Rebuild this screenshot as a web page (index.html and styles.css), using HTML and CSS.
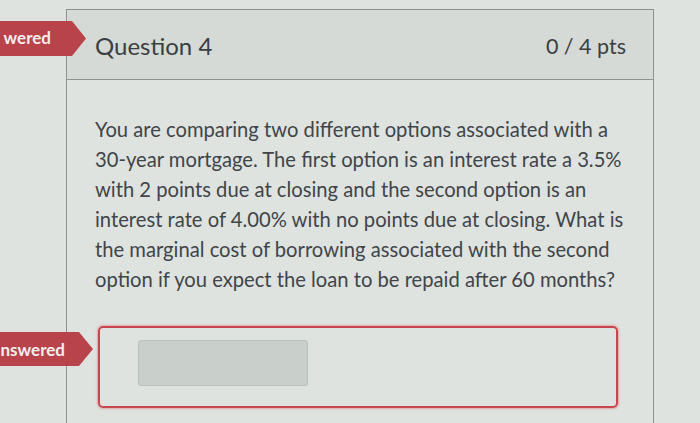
FILE: index.html
```html
<!DOCTYPE html>
<html>
<head>
<meta charset="utf-8">
<link rel="stylesheet" href="styles.css">
</head>
<body>
<div class="page">
  <div class="badge badge-top"><span>wered</span></div>
  <div class="badge badge-bottom"><span>nswered</span></div>
  <div class="question">
    <div class="q-header">
      <span class="q-title">Question 4</span>
      <span class="q-pts">0 / 4 pts</span>
    </div>
    <div class="q-body">
      <p class="q-text">You are comparing two different options associated with a<br>30-year mortgage. The first option is an interest rate a 3.5%<br>with 2 points due at closing and the second option is an<br>interest rate of 4.00% with no points due at closing. What is<br>the marginal cost of borrowing associated with the second<br>option if you expect the loan to be repaid after 60 months?</p>
      <div class="answer">
        <div class="answer-input"></div>
      </div>
    </div>
  </div>
</div>
</body>
</html>
```
FILE: styles.css
```css
html, body {
  margin: 0;
  padding: 0;
}
body {
  width: 700px;
  height: 423px;
  overflow: hidden;
  background: #dfe3df;
  font-family: Lato, "Open Sans", sans-serif;
}
.page {
  position: relative;
  padding: 9px 0 0 66px;
  height: 414px;
}
.badge {
  position: absolute;
  left: 0;
  background: #b8434b;
  color: #f4eeee;
  font-weight: 700;
  font-size: 17px;
  display: flex;
  justify-content: flex-end;
  align-items: center;
  overflow: hidden;
  white-space: nowrap;
  clip-path: polygon(0 0, calc(100% - 14px) 0, 100% 50%, calc(100% - 14px) 100%, 0 100%);
  box-sizing: border-box;
}
.badge-top {
  top: 21px;
  width: 86px;
  height: 35px;
  padding: 0 35px 2px 0;
}
.badge-bottom {
  top: 332px;
  width: 93px;
  height: 34px;
  padding: 0 28px 0 0;
}
.question {
  width: 588px;
  border: 1px solid #8d918f;
  border-bottom: none;
  height: 420px;
  box-sizing: border-box;
}
.q-header {
  height: 69px;
  border-bottom: 1px solid #8d918f;
  background: #d6dad6;
  display: flex;
  justify-content: space-between;
  align-items: center;
  padding: 0 27px 0 28px;
  color: #3a3f43;
}
.q-title {
  font-size: 24px;
  padding-top: 2px;
}
.q-pts {
  font-size: 21.5px;
  padding-top: 2px;
}
.q-body {
  padding: 34px 0 0 28px;
}
.q-text {
  margin: 0;
  white-space: nowrap;
  font-size: 20.2px;
  line-height: 30px;
  color: #40454a;
}
.answer {
  margin: 32px 0 0 3px;
  width: 520px;
  height: 82px;
  box-sizing: border-box;
  border: 2px solid #c7474f;
  border-radius: 5px;
  box-shadow: 0 0 2px 1px rgba(226, 140, 146, 0.7);
  padding: 12px 0 0 38px;
}
.answer-input {
  width: 170px;
  height: 46px;
  box-sizing: border-box;
  background: #c9d0cb;
  border: 1px solid #b9c1bc;
  border-radius: 3px;
}
```
